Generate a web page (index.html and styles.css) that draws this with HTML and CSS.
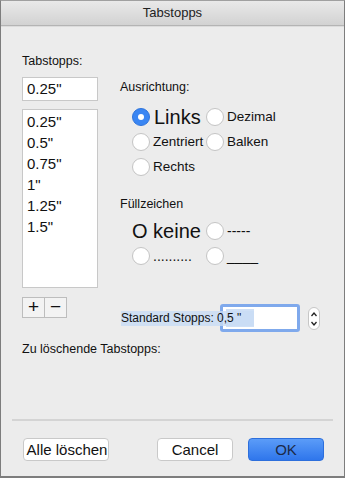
FILE: index.html
```html
<!DOCTYPE html>
<html lang="de">
<head>
  <meta charset="UTF-8" />
  <meta name="viewport" content="width=device-width, initial-scale=1.0"/>
  <title>Tabstopps</title>
  <link rel="stylesheet" href="styles.css">
</head>
<body>
  <div class="window">
    <header class="titlebar">Tabstopps</header>

    <main class="content">
      <div class="columns">
        <section class="left">
          <div class="label">Tabstopps:</div>
          <div class="field">0.25"</div>
          <ul class="list">
            <li>0.25"</li>
            <li>0.5"</li>
            <li>0.75"</li>
            <li>1"</li>
            <li>1.25"</li>
            <li>1.5"</li>
          </ul>
          <div class="plusminus">
            <span>+</span>
            <span>&minus;</span>
          </div>
        </section>

        <section class="right">
          <div class="label">Ausrichtung:</div>
          <div class="radios align">
            <label class="radio big"><i class="dot checked"></i>Links</label>
            <label class="radio"><i class="dot"></i>Dezimal</label>
            <label class="radio"><i class="dot"></i>Zentriert</label>
            <label class="radio"><i class="dot"></i>Balken</label>
            <label class="radio"><i class="dot"></i>Rechts</label>
          </div>

          <div class="label fill">Füllzeichen</div>
          <div class="radios leader">
            <label class="radio big plain">O keine</label>
            <label class="radio"><i class="dot"></i>-----</label>
            <label class="radio"><i class="dot"></i>..........</label>
            <label class="radio"><i class="dot"></i>____</label>
          </div>

          <div class="default-row">
            <span class="sel">Standard Stopps: 0,5 "</span>
            <span class="focus-box"><span class="inner-sel"></span></span>
            <span class="stepper">
              <svg width="10" height="22" viewBox="0 0 10 22">
                <path d="M2.5 8 L5 5 L7.5 8" fill="none" stroke="#222" stroke-width="1.3"/>
                <path d="M2.5 14 L5 17 L7.5 14" fill="none" stroke="#222" stroke-width="1.3"/>
              </svg>
            </span>
          </div>
        </section>
      </div>

      <div class="label remove">Zu löschende Tabstopps:</div>
    </main>

    <footer class="buttons">
      <button class="btn clear">Alle löschen</button>
      <div class="btn-group">
        <button class="btn">Cancel</button>
        <button class="btn primary">OK</button>
      </div>
    </footer>
  </div>
</body>
</html>
```

FILE: styles.css
```css
:root {
  --bg: #ececec;
  --border: #c8c8c8;
  --text: #111111;
  --blue: #3a86f3;
}

* {
  box-sizing: border-box;
  margin: 0;
  padding: 0;
  font-family: 'Liberation Sans', Arial, sans-serif;
}

body {
  width: 345px;
  height: 478px;
  overflow: hidden;
  background: var(--bg);
  color: var(--text);
}

.window {
  height: 478px;
  display: flex;
  flex-direction: column;
  border: 1px solid #7d7d7d;
  border-top-color: #a0a0a0;
  border-bottom-width: 2px;
  background: var(--bg);
}

.titlebar {
  height: 25px;
  flex-shrink: 0;
  text-align: center;
  font-size: 13px;
  line-height: 24px;
  color: #222;
  background: linear-gradient(#e9e9e9, #d2d2d2);
  border-bottom: 1px solid #b4b4b4;
  box-shadow: 0 1px 0 #dcdcdc;
}

.content {
  flex-grow: 1;
  padding: 27px 0 0 21px;
}

.columns {
  display: flex;
  gap: 22px;
}

.label {
  font-size: 12.5px;
  line-height: 16px;
}

.left {
  width: 76px;
  display: flex;
  flex-direction: column;
}

.field {
  margin-top: 8px;
  height: 24px;
  background: #fff;
  border: 1px solid var(--border);
  font-size: 15px;
  line-height: 22px;
  padding-left: 4px;
}

.list {
  list-style: none;
  margin-top: 8px;
  height: 179px;
  background: #fff;
  border: 1px solid var(--border);
  padding: 1px 0 0 4px;
  font-size: 15px;
  line-height: 21px;
}

.plusminus {
  display: flex;
  margin-top: 9px;
  width: 45px;
  height: 21px;
  border: 1px solid #bdbdbd;
  background: #f3f3f3;
}

.plusminus span {
  flex: 1;
  text-align: center;
  font-size: 19px;
  line-height: 18px;
}

.plusminus span + span {
  border-left: 1px solid #bdbdbd;
}

.right {
  padding-top: 26px;
  flex-grow: 1;
}

.radios {
  display: grid;
  grid-template-columns: 74px auto;
  padding-left: 12px;
}

.align {
  margin-top: 9px;
  grid-auto-rows: 25px;
}

.radio {
  display: flex;
  align-items: center;
  gap: 3px;
  font-size: 13.5px;
  line-height: 18px;
  white-space: nowrap;
}

.radio.big {
  font-size: 20px;
  gap: 4px;
}

.dot {
  width: 18px;
  height: 18px;
  flex-shrink: 0;
  border-radius: 50%;
  background: #fff;
  border: 1px solid #c4c4c4;
}

.dot.checked {
  background: var(--blue);
  border-color: #2f74db;
  position: relative;
}

.dot.checked::after {
  content: '';
  position: absolute;
  left: 5px;
  top: 5px;
  width: 6px;
  height: 6px;
  border-radius: 50%;
  background: #fff;
}

.fill {
  margin-top: 17px;
}

.leader {
  margin-top: 6px;
  grid-auto-rows: 25px;
  padding-left: 12px;
}

.leader .radio {
  font-size: 14px;
}

.leader .radio.big {
  font-size: 20px;
}

.default-row {
  display: flex;
  align-items: center;
  margin-top: 36px;
  margin-left: 1px;
  font-size: 12px;
}

.sel {
  position: relative;
  z-index: 1;
  display: inline-block;
  width: 133px;
  background: rgba(200, 220, 245, 0.8);
  line-height: 15px;
  white-space: nowrap;
}

.focus-box {
  margin-left: -34px;
  width: 80px;
  height: 28px;
  border: 3px solid #7fa9ec;
  border-radius: 3px;
  background: #fff;
  padding: 2px 0 0 3px;
}

.inner-sel {
  display: block;
  width: 28px;
  height: 18px;
  background: #cfe0f6;
}

.stepper {
  margin-left: 8px;
  width: 12px;
  height: 23px;
  border: 1px solid #c6c6c6;
  border-radius: 6px;
  background: #fff;
  display: flex;
  justify-content: center;
}

.remove {
  margin-top: 9px;
  font-size: 12.5px;
}

.buttons {
  margin: 0 11px;
  height: 57px;
  border-top: 2px solid #d4d4d4;
  display: flex;
  justify-content: space-between;
  align-items: flex-start;
  padding: 17px 9px 0 11px;
}

.btn-group {
  display: flex;
  gap: 15px;
}

.btn {
  height: 23px;
  border: 1px solid #c9c9c9;
  border-radius: 4px;
  background: #fff;
  font-size: 15px;
  color: #111;
}

.clear {
  width: 86px;
  padding-left: 2px;
}

.btn-group .btn {
  width: 76px;
}

.btn.primary {
  background: linear-gradient(#5b9cf8, #2f76ec);
  border-color: #2d6fdc;
  color: #1c2a48;
}
```
